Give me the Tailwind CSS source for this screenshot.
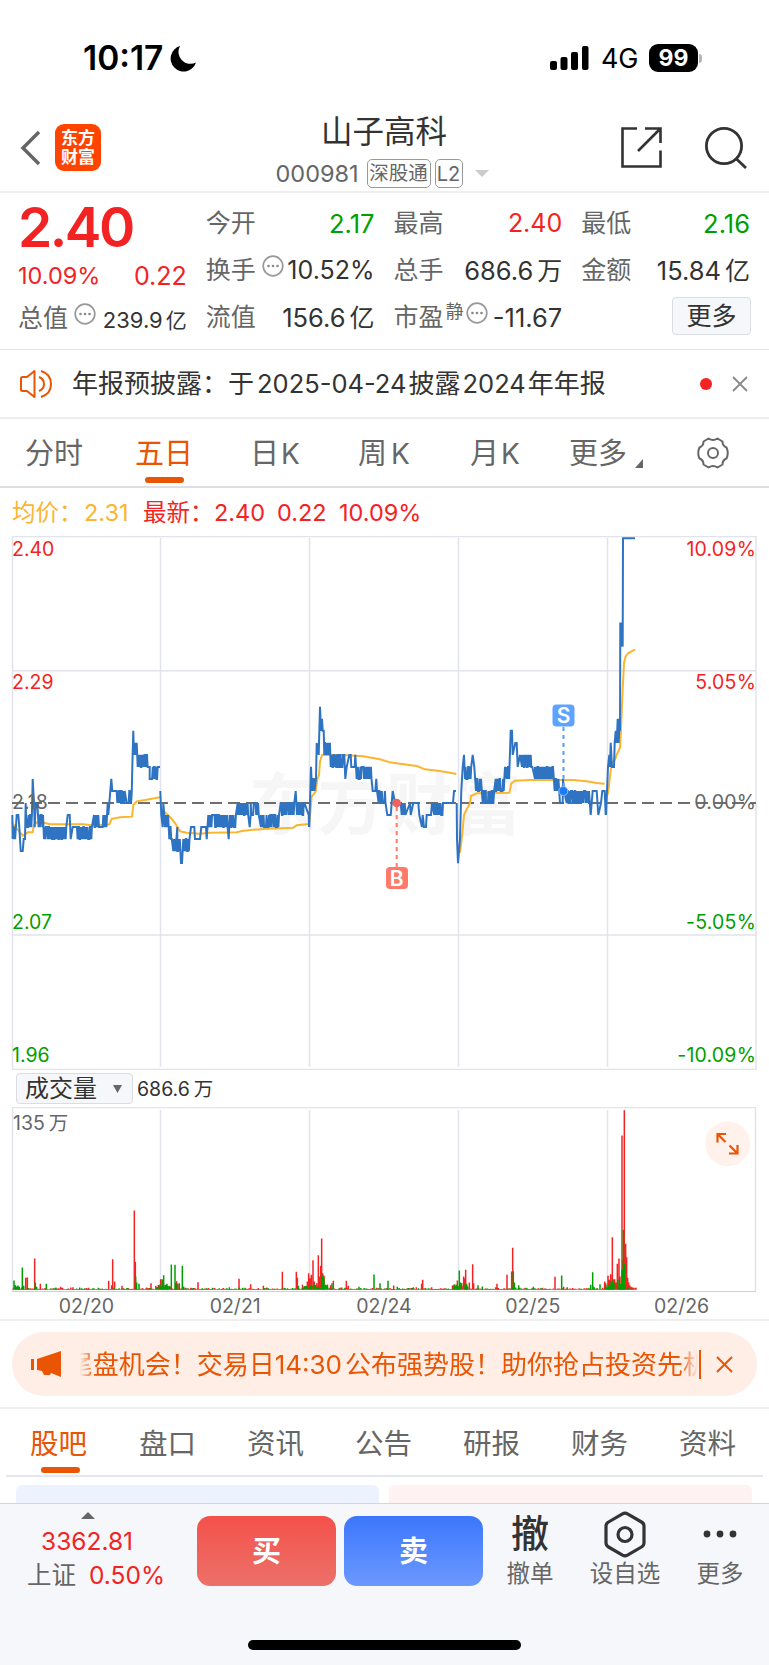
<!DOCTYPE html>
<html lang="zh-CN">
  <head>
    <meta charset="UTF-8" />
    <meta name="viewport" content="width=device-width, initial-scale=1.0" />
    <script src="https://cdn.jsdelivr.net/npm/@tailwindcss/browser@4"></script>
    <title>山子高科 000981</title>
  </head>
  <body
    class="w-[769px] h-[1665px] overflow-hidden bg-white text-[#333] leading-none whitespace-nowrap font-[Inter,'Noto_Sans_CJK_SC',sans-serif]"
  >
    <!-- Status bar -->
    <div class="h-[104px] pt-[43px] pl-[83px] pr-[67px] flex justify-between">
      <div class="h-[31px] flex items-center gap-[7px] text-black">
        <span class="text-[33.500px] font-semibold">10:17</span>
        <svg class="w-[27px] h-[27px]" viewBox="0 0 27 27">
          <path d="M10 1A13 13 0 1 0 26 17.500A12 12 0 0 1 10 1Z" />
        </svg>
      </div>
      <div class="h-[30px] flex items-center text-black">
        <svg class="w-[39px] h-[25px] mr-[12px]" viewBox="0 0 39 25">
          <rect x="0" y="15" width="7" height="9" rx="2" />
          <rect x="10.500" y="11" width="7" height="13" rx="2" />
          <rect x="21" y="6" width="7" height="18" rx="2" />
          <rect x="32" y="0" width="6.500" height="24" rx="2" />
        </svg>
        <span class="text-[27px] w-[48px] tracking-[-0.300px]">4G</span>
        <span
          class="w-[49px] h-[28px] rounded-[9px] bg-black text-white text-[23px] font-bold flex items-center justify-center"
          >99</span
        >
        <span class="w-[3px] h-[9px] ml-[1px] rounded-r bg-[#b5b5b5]"></span>
      </div>
    </div>

    <!-- Header -->
    <header class="h-[89px] border-b-2 border-[#eee] flex">
      <div class="w-[240px] pl-[20px] pt-[20px] flex gap-[14px]">
        <svg class="w-[21px] h-[46px]" viewBox="0 0 21 46" fill="none" stroke="#666" stroke-width="3.500">
          <path d="M19 8L3 24L19 40" />
        </svg>
        <div
          class="w-[46px] h-[47px] rounded-[9px] bg-[#ff4400] text-white text-[17px] leading-[19px] font-bold flex flex-col items-center justify-center"
        >
          <span>东方</span><span>财富</span>
        </div>
      </div>
      <div class="flex-1 flex flex-col items-center">
        <h1 class="text-[31.500px] h-[34px] mt-[11px] ml-[-1px] leading-[34px]">山子高科</h1>
        <div class="h-[29px] mt-[10px] ml-[-5px] flex items-center text-[#666]">
          <span class="text-[23.500px] w-[91px]">000981</span>
          <span
            class="w-[64px] h-[29px] border-[1.500px] border-[#999] rounded-[5px] text-[19.500px] flex items-center justify-center"
            >深股通</span
          >
          <span
            class="w-[28px] h-[29px] ml-[4px] border-[1.500px] border-[#999] rounded-[5px] text-[20px] flex items-center justify-center"
            >L2</span
          >
          <svg class="w-[14px] h-[7px] ml-[12px]" viewBox="0 0 14 7"><path d="M0 0H14L7 7Z" fill="#ccc" /></svg>
        </div>
      </div>
      <div class="w-[240px] pt-[22px] pl-[91px] flex gap-[42px]">
        <svg class="w-[43px] h-[43px]" viewBox="0 0 43 43" fill="none" stroke="#333" stroke-width="2.600">
          <path d="M17 2.500H2.500V40.500H40.500V24.500M25 2.500H40.500V17M40 3L18 25" />
        </svg>
        <svg class="w-[43px] h-[43px]" viewBox="0 0 43 43" fill="none" stroke="#333" stroke-width="2.800">
          <circle cx="19" cy="20" r="17.600" />
          <path d="M31.500 33L41 42" />
        </svg>
      </div>
    </header>

    <!-- Quote panel -->
    <section
      class="h-[157px] border-b border-[#e3e6ea] pl-[18px] pr-[19px] pt-[7px] grid grid-cols-4 gap-x-[19px] text-[25px]"
    >
      <div class="text-[#f42323]">
        <div class="h-[54px] text-[55px] font-semibold tracking-[-2.500px]">2.40</div>
        <div class="h-[41px] pt-[3px] flex justify-between items-center">
          <span class="text-[23.500px]">10.09%</span><span class="text-[25px]">0.22</span>
        </div>
        <div class="h-[47px] flex items-center">
          <span class="text-[#666]">总值</span>
          <svg class="w-[22px] h-[22px] ml-[6px] mb-[10px]"><use href="#hint" /></svg>
          <span class="ml-auto mt-[3px] text-[22px] text-[#333]">239.9<span class="ml-[3px] text-[21px]">亿</span></span>
        </div>
      </div>
      <div>
        <div class="h-[47px] flex items-center justify-between">
          <span class="text-[#666]">今开</span><span class="text-[25.500px] text-[#009f00]">2.17</span>
        </div>
        <div class="h-[47px] flex items-center">
          <span class="text-[#666]">换手</span>
          <svg class="w-[22px] h-[22px] ml-[6px] mb-[10px]"><use href="#hint" /></svg>
          <span class="ml-auto">10.52%</span>
        </div>
        <div class="h-[47px] flex items-center justify-between">
          <span class="text-[#666]">流值</span><span class="text-[25.500px]">156.6<span class="ml-[4px] text-[25px]">亿</span></span>
        </div>
      </div>
      <div>
        <div class="h-[47px] flex items-center justify-between">
          <span class="text-[#666]">最高</span><span class="text-[25px] text-[#f42323]">2.40</span>
        </div>
        <div class="h-[47px] flex items-center justify-between">
          <span class="text-[#666]">总手</span><span class="text-[25.500px]">686.6<span class="ml-[4px] text-[25px]">万</span></span>
        </div>
        <div class="h-[47px] flex items-center">
          <span class="text-[#666]">市盈</span>
          <span class="text-[18px] text-[#666] ml-[2px] mb-[12px]">静</span>
          <svg class="w-[22px] h-[22px] ml-[2px] mb-[10px]"><use href="#hint" /></svg>
          <span class="ml-auto text-[25.500px]">-11.67</span>
        </div>
      </div>
      <div>
        <div class="h-[47px] flex items-center justify-between">
          <span class="text-[#666]">最低</span><span class="text-[25.500px] text-[#009f00]">2.16</span>
        </div>
        <div class="h-[47px] flex items-center justify-between">
          <span class="text-[#666]">金额</span><span class="text-[25.500px]">15.84<span class="ml-[4px] text-[25px]">亿</span></span>
        </div>
        <button
          class="w-[79px] h-[38px] mt-[3px] ml-auto mr-[-1px] flex items-center justify-center bg-[#f6f7fa] border border-[#d9dce3] rounded-[4px]"
        >
          更多
        </button>
      </div>
    </section>

    <!-- Notice -->
    <section class="h-[69px] border-b-2 border-[#eee] pl-[19px] pr-[21px] flex items-center text-[26px]">
      <svg class="w-[34px] h-[30px] mr-[19px]" viewBox="0 0 34 30" fill="none" stroke="#ea5504" stroke-width="2">
        <path d="M2 9.500Q2 8 3.500 8H8L15.500 2V28L8 22H3.500Q2 22 2 20.500Z" stroke-linejoin="round" />
        <path d="M20 8Q25 10 25 15T20 22M22 2Q32 5 32 15T22 28" />
      </svg>
      <span>年报预披露：于<span class="ml-[3px] mr-[2px] text-[25.500px]">2025-04-24</span>披露<span class="mx-[2px] text-[25.500px]">2024</span>年年报</span>
      <span class="w-[12px] h-[12px] ml-auto rounded-full bg-[#f42323]"></span>
      <svg class="w-[16px] h-[16px] ml-[20px]" viewBox="0 0 16 16" stroke="#888" stroke-width="1.800">
        <path d="M1 1L15 15M15 1L1 15" />
      </svg>
    </section>

    <!-- Period tabs -->
    <nav class="h-[69px] border-b-2 border-[#dcdfe4] pl-[25px] flex text-[29px] leading-[69px] text-[#666]">
      <span class="w-[110px]">分时</span>
      <span class="w-[115px] text-[#ea5504]"
        >五日<span class="block w-[39px] h-[6px] ml-[10px] mt-[-11px] rounded-full bg-[#ea5504]"></span
      ></span>
      <span class="w-[108px]">日<span class="ml-[2px] text-[28px]">K</span></span>
      <span class="w-[112px]">周<span class="ml-[4px] text-[28px]">K</span></span>
      <span class="w-[99px]">月<span class="ml-[2px] text-[28px]">K</span></span>
      <span class="w-[66px]">更多</span>
      <svg class="w-[8px] h-[9px] mt-[40px] mr-[53px]" viewBox="0 0 8 9"><path d="M8 0V9H0Z" fill="#666" /></svg>
      <svg class="w-[34px] h-[34px] mt-[17px]" viewBox="0 0 34 34" fill="none" stroke="#666" stroke-width="2">
        <path
          d="M12.500 2.500Q17 5.500 21.500 2.500L26.500 5.500Q26.500 10 30.500 11.500Q33 17 30.500 22.500Q26.500 24 26.500 28.500L21.500 31.500Q17 28.500 12.500 31.500L7.500 28.500Q7.500 24 3.500 22.500Q1 17 3.500 11.500Q7.500 10 7.500 5.500Z"
          stroke-linejoin="round"
        />
        <circle cx="17" cy="17" r="5" />
      </svg>
    </nav>

    <!-- Legend -->
    <div class="h-[48px] pl-[12px] pt-[1px] flex items-center text-[23.500px] text-[#f42323]">
      <span class="w-[72px] text-[#fbb52f]">均价：</span>
      <span class="w-[59px] text-[#fbb52f]">2.31</span>
      <span class="w-[71px]">最新：</span>
      <span class="w-[63px]">2.40</span>
      <span class="w-[62px]">0.22</span>
      <span>10.09%</span>
    </div>

    <!-- Price chart -->
    <svg class="block w-[769px] h-[534px]" viewBox="0 536 769 534" fill="none">
      <text x="249" y="829" font-size="67" font-weight="700" letter-spacing="1.500" fill="#f6f6f6">东方财富</text>
      <g stroke="#e1e4ec" stroke-width="1.500">
        <path d="M12.500 536.500H756V1069.500H12.500ZM12 670.700H756M12 935H756" />
        <path d="M160.500 538V1067M309.500 538V1067M458.500 538V1067M607.500 538V1067" />
      </g>
      <path d="M12 803H756" stroke="#6e6e6e" stroke-width="2" stroke-dasharray="12 6" />
      <path id="avgLine" stroke="#fbb52f" stroke-width="2" />
      <path id="priceLine" stroke="#2f74c3" stroke-width="2" />
      <g font-size="19.500">
        <g fill="#f42323">
          <text x="12" y="556">2.40</text>
          <text x="12" y="689">2.29</text>
          <text x="756" y="556" text-anchor="end" letter-spacing="0.200">10.09%</text>
          <text x="756" y="689" text-anchor="end" letter-spacing="0.200">5.05%</text>
        </g>
        <g fill="#666">
          <text x="12" y="809">2.18</text>
          <text x="756" y="809" text-anchor="end" letter-spacing="0.200">0.00%</text>
        </g>
        <g fill="#009f00">
          <text x="12" y="929">2.07</text>
          <text x="12" y="1062">1.96</text>
          <text x="756" y="929" text-anchor="end" letter-spacing="0.200">-5.05%</text>
          <text x="756" y="1062" text-anchor="end" letter-spacing="0.200">-10.09%</text>
        </g>
      </g>
      <!-- trade marks -->
      <path d="M396.700 807V867" stroke="#ff7a6b" stroke-width="2" stroke-dasharray="4 4" />
      <circle cx="396.700" cy="803" r="4.300" fill="#f0645c" />
      <rect x="386" y="867" width="22" height="22" rx="4" fill="#ff7a6b" />
      <text x="396.700" y="885.500" font-size="21" font-weight="600" fill="#fff" text-anchor="middle">B</text>
      <path d="M563.500 727V786" stroke="#5b9dff" stroke-width="2" stroke-dasharray="4 4" />
      <circle cx="563.300" cy="791" r="4.500" fill="#1f7af5" stroke="#8fbcff" />
      <rect x="552.500" y="704.500" width="22" height="22" rx="4" fill="#5ea3ff" />
      <text x="563.500" y="723" font-size="21" font-weight="600" fill="#fff" text-anchor="middle">S</text>
    </svg>

    <!-- Volume header -->
    <div class="h-[37px] pl-[16px] pt-[3px] flex">
      <div class="w-[117px] h-[31px] pl-[8px] flex items-center bg-[#f6f7fa] border border-[#d9dce3] rounded-[4px] text-[24px]">
        成交量
        <svg class="w-[9px] h-[8px] ml-[16px]" viewBox="0 0 9 8"><path d="M0 0H9L4.500 8Z" fill="#666" /></svg>
      </div>
      <span class="ml-[4px] h-[34px] flex items-center text-[19.500px]">686.6<span class="ml-[4px]">万</span></span>
    </div>

    <!-- Volume chart -->
    <svg class="block w-[769px] h-[186px]" viewBox="0 1107 769 186" fill="none">
      <g stroke="#e1e4ec" stroke-width="1.500">
        <path d="M12.500 1291.500V1107.500H755.500V1291.500" />
        <path d="M160.500 1110V1290M309.500 1110V1290M458.500 1110V1290M607.500 1110V1290" />
      </g>
      <path d="M12 1291.500H756" stroke="#ccd0d8" />
      <text x="13" y="1129.500" font-size="19.500" fill="#666">135<tspan dx="4">万</tspan></text>
      <path id="volUp" stroke="#f42323" stroke-width="1.500" />
      <path id="volDown" stroke="#009f00" stroke-width="1.500" />
      <circle cx="727.700" cy="1143.700" r="22.500" fill="#fff1eb" />
      <path
        d="M717.500 1142.500V1134H726M718 1134.500L725.500 1142M737.500 1145V1153.500H729M737 1153L729.500 1145.500"
        stroke="#ea5504"
        stroke-width="2.200"
      />
    </svg>
    <div class="h-[28px] pt-[2px] pl-[12px] pr-[13px] border-b-2 border-[#eee] grid grid-cols-5 items-center text-center text-[19.500px] text-[#666]">
      <span>02/20</span><span>02/21</span><span>02/24</span><span>02/25</span><span>02/26</span>
    </div>

    <!-- Promo banner -->
    <section class="h-[88px] px-[12px] flex items-center border-b-2 border-[#eee]">
      <div class="w-full h-[64px] rounded-full bg-[#feeee6] pl-[19px] pr-[24px] flex items-center text-[26px] text-[#ea5504]">
        <svg class="w-[31px] h-[27px] mr-[18px] shrink-0" viewBox="0 0 31 27" fill="#ea5504">
          <path d="M0 8H3V19H0ZM6 8L30 0V26L20 22L19 24H13L11 20L6 19Z" />
        </svg>
        <div
          class="w-[619px] h-[40px] pt-[1px] flex items-center justify-end overflow-hidden [mask-image:linear-gradient(to_right,transparent,#000_14px,#000_600px,transparent_618px)]"
        >
          <span class="mr-[-10px]">尾盘机会！交易日<span class="mr-[3px] text-[26px]">14:30</span>公布强势股！助你抢占投资先机</span>
        </div>
        <span class="w-[2px] h-[29px] bg-[#ea5504]"></span>
        <svg class="w-[17px] h-[17px] ml-auto" viewBox="0 0 17 17" stroke="#ea5504" stroke-width="2">
          <path d="M1 1L16 16M16 1L1 16" />
        </svg>
      </div>
    </section>

    <!-- Section tabs -->
    <nav class="h-[68px] mx-[6px] px-[24px] flex border-b-2 border-[#e4e7ee] text-[28.500px] leading-[69px] text-[#666]">
      <span class="w-[109px] text-[#ea5504]"
        >股吧<span class="block w-[39px] h-[6px] ml-[11px] mt-[-11px] rounded-full bg-[#ea5504]"></span
      ></span>
      <span class="w-[108px]">盘口</span>
      <span class="w-[108px]">资讯</span>
      <span class="w-[108px]">公告</span>
      <span class="w-[108px]">研报</span>
      <span class="w-[108px]">财务</span>
      <span>资料</span>
    </nav>
    <div class="h-[26px] pl-[16px] pr-[17px] pt-[8px] grid grid-cols-2 gap-[10px]">
      <div class="rounded-t-[6px] bg-[#edf3fe]"></div>
      <div class="rounded-t-[6px] bg-[#fff2f3]"></div>
    </div>

    <!-- Bottom bar -->
    <footer class="h-[163px] bg-[#f6f7fa] border-t border-[#d3d6da]">
      <div class="h-[136px] flex text-[#666]">
        <div class="w-[197px] pt-[8px] text-[24.500px] text-[#f42323]">
          <svg class="w-[14px] h-[7px] ml-[81px]" viewBox="0 0 14 7"><path d="M0 7H14L7 0Z" fill="#666" /></svg>
          <div class="pl-[41px] pt-[8px] h-[39px] leading-[28px]">3362.81</div>
          <div class="pl-[27px] leading-[34px]"><span class="text-[#666]">上证</span><span class="ml-[13px]">0.50%</span></div>
        </div>
        <button
          class="w-[139px] h-[70px] mt-[12px] rounded-[13px] bg-gradient-to-b from-[#f4504a] to-[#ec7069] text-white text-[29px] font-bold"
        >
          买
        </button>
        <button
          class="w-[139px] h-[70px] mt-[12px] ml-[8px] rounded-[13px] bg-gradient-to-b from-[#3b76fb] to-[#6c98ff] text-white text-[29px] font-bold"
        >
          卖
        </button>
        <div class="w-[94px] flex flex-col items-center text-[23.500px]">
          <span class="h-[58px] pt-[9px] text-[38px] leading-[40px] font-medium text-[#333]">撤</span>
          <span>撤单</span>
        </div>
        <div class="w-[96px] flex flex-col items-center text-[23.500px]">
          <svg class="w-[42px] h-[47px] mt-[7px] mb-[4px]" viewBox="0 0 42 47" fill="none" stroke="#333" stroke-width="3.200">
            <path
              d="M18.500 2.800Q21 1.500 23.500 2.800L37.500 11Q40 12.500 40 15V32Q40 34.500 37.500 36L23.500 44.200Q21 45.500 18.500 44.200L4.500 36Q2 34.500 2 32V15Q2 12.500 4.500 11Z"
            />
            <circle cx="21" cy="23.500" r="7" />
          </svg>
          <span>设自选</span>
        </div>
        <div class="flex-1 pr-[2px] flex flex-col items-center text-[23.500px]">
          <svg class="w-[34px] h-[8px] mt-[26px] mb-[24px]" viewBox="0 0 34 8" fill="#333">
            <circle cx="4" cy="4" r="3.400" />
            <circle cx="17" cy="4" r="3.400" />
            <circle cx="30" cy="4" r="3.400" />
          </svg>
          <span>更多</span>
        </div>
      </div>
      <div class="w-[273px] h-[10px] mx-auto rounded-full bg-black"></div>
    </footer>

    <svg class="hidden">
      <symbol id="hint" viewBox="0 0 22 22">
        <circle cx="11" cy="11" r="9.800" fill="none" stroke="#999" stroke-width="1.700" />
        <circle cx="6.500" cy="11" r="1.300" fill="#888" />
        <circle cx="11" cy="11" r="1.300" fill="#888" />
        <circle cx="15.500" cy="11" r="1.300" fill="#888" />
      </symbol>
    </svg>

    <script>
      // x is in 1/3 px, price in ticks of 0.01 around 2.18
      // [x, tick] is a point, [x, low, high] swings between both up to x
      const price = [
        [[37,-1],[38,-3],[47,-3,-2],[50,-1],[55,-1],[58,-2],[62,-4],[68,-4],[71,-3],[75,-3],[77,0],[79,-2],[96,-2,-1],[98,2],[102,0],[104,-2],[107,0],[112,0],[114,-1],[130,-2,-1],[132,-3],[200,-3,-2],[203,-1],[209,-1],[212,-3],[218,-2],[231,-2],[276,-3,-2],[282,-1],[320,-2,-1],[323,0],[325,-1],[328,0],[331,1],[334,2],[337,1],[350,1],[376,0,1],[380,0],[386,0],[396,0,1],[397,3],[400,6],[402,4],[405,5],[408,4],[410,5],[413,3],[443,3,4],[449,3],[474,2,3],[480,3]],
        [[481,1],[484,-1],[488,-2],[490,0],[493,-1],[505,-2,-1],[508,-3],[517,-3,-2],[520,-4],[530,-4,-3],[532,-2],[540,-4,-3],[543,-5],[546,-5],[550,-3],[570,-4,-3],[573,-2],[583,-2],[585,-3],[600,-3],[604,-2],[618,-2],[620,-3],[625,-1],[684,-2,-1],[686,-3],[689,-1],[708,-2,-1],[713,0],[745,-1,0],[749,-2],[752,-1],[778,-1,0],[783,-2],[838,-2,-1],[842,0],[883,-1,0],[887,1],[891,-1],[915,-1,0],[926,-1],[927,-2]],
        [[928,-2],[933,3],[936,1],[944,1,2],[948,2],[950,5],[956,4],[960,8],[963,6],[966,7],[968,6],[971,6],[973,4],[990,4,5],[992,3],[1033,3,4],[1036,2],[1040,3],[1048,4],[1052,4],[1054,3],[1064,3],[1066,4],[1070,2],[1115,2,3],[1118,1],[1126,1],[1129,2],[1131,1],[1136,0],[1158,0,1],[1162,-1],[1172,-1],[1178,1],[1185,0],[1202,0],[1205,-1],[1218,-1,0],[1230,0],[1232,-1],[1240,0],[1255,0],[1258,-1],[1266,-2],[1268,-1],[1272,-2],[1278,-2],[1280,-1],[1293,-1],[1296,0],[1303,-1],[1330,-1,0],[1334,0],[1359,0],[1362,1],[1368,1]],
        [[1370,0],[1371,-3],[1374,-5],[1377,-4],[1380,-3],[1384,1],[1388,3],[1392,4],[1395,2],[1414,2,3],[1418,4],[1423,3],[1428,1],[1443,1,2],[1448,0],[1458,0,1],[1484,0,1],[1487,2],[1512,1,2],[1515,3],[1520,2],[1528,2,3],[1532,6],[1536,6],[1538,4],[1546,5],[1550,5],[1553,3],[1560,4],[1566,3],[1595,3,4],[1597,3],[1605,2],[1660,2,3],[1664,1],[1676,1,2],[1680,0],[1688,0],[1689,2],[1692,1],[1700,0],[1768,0,1],[1772,-1],[1778,1],[1790,1],[1795,-1],[1803,0],[1807,1],[1814,1],[1817,-1]],
        [[1818,-1],[1824,3],[1828,4],[1830,3],[1832,5],[1836,3],[1842,3],[1844,5],[1847,6],[1850,5],[1853,7],[1856,5],[1859,7],[1860,6],[1861,15],[1864,13],[1865,15],[1868,13],[1869,22],[1905,22]],
      ];

      // average price, both values in 1/3 px, y from the 2.18 line down
      const average = [
        [[37,60],[48,75],[58,85],[68,98],[78,92],[84,88],[98,88],[102,64],[112,58],[135,60],[150,64],[250,64],[275,67],[300,67],[328,64],[335,48],[360,43],[396,41],[400,6],[410,-5],[440,-10],[480,-17]],
        [[484,20],[500,32],[515,48],[525,60],[540,85],[560,89],[600,92],[630,89],[710,88],[730,83],[790,78],[880,74],[890,67],[927,63],[930,41],[935,-19],[947,-34],[952,-71],[957,-84],[960,-124],[966,-144],[1030,-144],[1090,-140],[1140,-131],[1170,-122],[1200,-118],[1250,-111],[1275,-101],[1320,-96],[1350,-91],[1369,-87]],
        [[1380,149],[1386,101],[1392,36],[1400,19],[1410,1],[1413,-21],[1430,-29],[1528,-31],[1534,-59],[1545,-67],[1590,-69],[1720,-69],[1760,-65],[1790,-60],[1814,-58]],
        [[1820,-20],[1824,-30],[1830,-80],[1835,-120],[1845,-130],[1850,-145],[1860,-165],[1863,-220],[1868,-340],[1872,-420],[1877,-440],[1885,-450],[1905,-460]],
      ];

      let seed = 7;
      function rand() {
        seed = (seed * 16807) % 2147483647;
        return seed / 2147483647;
      }

      function at(x, tick) {
        return `${(x / 3).toFixed(1)} ${(803 - tick * 12.030).toFixed(1)}`;
      }

      let d = "";
      price.forEach((day) => {
        let x = day[0][0];
        d += "M" + at(x, day[0][1]);
        day.slice(1).forEach((p) => {
          if (p.length === 2) {
            d += "L" + at(p[0], p[1]);
          } else {
            let up = false;
            for (; x < p[0]; x += 1.860) {
              if (rand() < 0.750) up = !up;
              d += "L" + at(x, up ? p[2] : p[1]);
            }
          }
          x = p[0];
        });
      });
      document.getElementById("priceLine").setAttribute("d", d);

      document.getElementById("avgLine").setAttribute(
        "d",
        average
          .map((day) => "M" + day.map(([x, y]) => `${x / 3} ${803 + y / 3}`).join("L"))
          .join("")
      );

      // volume spikes [x, height], 1/3 px
      const up = [[77,36],[82,37],[104,94],[121,18],[182,9],[219,8],[266,6],[326,27],[338,92],[344,25],[335,14],[366,12],[403,238],[406,84],[453,20],[482,32],[478,12],[488,28],[530,26],[534,18],[594,23],[717,33],[752,17],[790,12],[847,54],[889,54],[892,36],[922,25],[926,50],[930,35],[934,45],[939,89],[943,25],[950,20],[955,104],[958,40],[962,72],[965,154],[968,50],[972,42],[992,14],[1000,27],[1039,27],[1045,12],[1181,13],[1240,8],[1249,8],[1265,18],[1268,30],[1295,8],[1362,14],[1368,12],[1372,28],[1385,20],[1391,40],[1394,34],[1397,60],[1408,22],[1418,77],[1421,20],[1487,8],[1491,18],[1521,45],[1535,55],[1538,126],[1600,9],[1665,39],[1691,9],[1702,8],[1778,12],[1814,25],[1824,42],[1828,30],[1832,47],[1837,158],[1840,32],[1844,32],[1848,22],[1852,78],[1857,94],[1860,40],[1866,463],[1869,90],[1873,539],[1877,138],[1880,98],[1883,36],[1886,22],[1889,14],[1892,10],[1896,8],[1900,6],[1908,6]];
      const down = [[42,28],[46,14],[50,10],[54,13],[58,9],[67,67],[71,12],[106,22],[110,9],[139,18],[239,7],[407,40],[410,22],[417,18],[486,32],[491,44],[496,15],[501,18],[506,10],[514,76],[525,75],[528,20],[538,20],[547,72],[551,10],[688,8],[895,12],[942,20],[946,14],[965,40],[968,45],[972,34],[976,15],[980,14],[996,20],[1077,9],[1122,46],[1140,20],[1164,27],[1192,9],[1378,58],[1382,22],[1400,18],[1403,10],[1434,14],[1447,10],[1540,56],[1543,22],[1556,14],[1685,43],[1772,15],[1778,53],[1783,8],[1800,17],[1817,20],[1834,25],[1838,28],[1842,18],[1853,30],[1858,32],[1862,18],[1866,60],[1870,180],[1873,80]];
      for (let x = 40; x < 1908; x += 2.500) {
        const near = [490, 930, 960, 1380, 1840].some((c) => Math.abs(x - c) < 24);
        (rand() < 0.600 ? up : down).push([x, near ? 4 + rand() * 12 : 1.500 + rand() * rand() * 6]);
      }
      const bars = (list) => list.map(([x, h]) => `M${x / 3} 1289.800V${1289.800 - h / 3}`).join("");
      document.getElementById("volUp").setAttribute("d", bars(up));
      document.getElementById("volDown").setAttribute("d", bars(down));
    </script>
  </body>
</html>
